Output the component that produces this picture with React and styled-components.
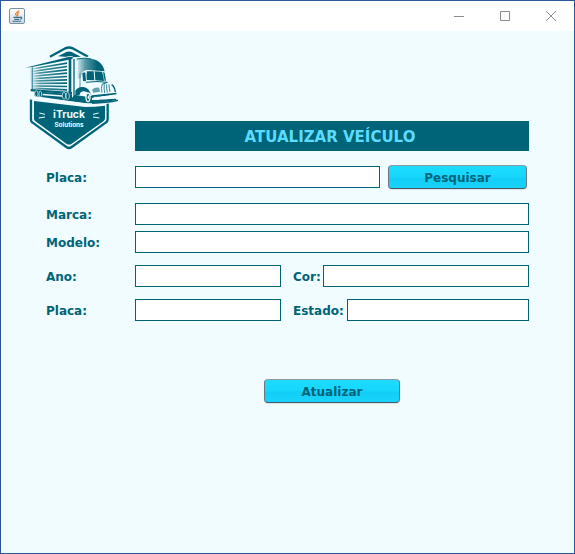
import React from "react";
import styled, { createGlobalStyle } from "styled-components";

const teal = "#006478";
const pale = "#f0fcff";

const GlobalStyle = createGlobalStyle`
  *, *::before, *::after { box-sizing: border-box; }
  body { margin: 0; font-family: "DejaVu Sans", Verdana, sans-serif; }
`;

const Window = styled.div`
  display: flex;
  flex-direction: column;
  min-height: 100vh;
  border: 1px solid #2b5797;
  background: ${pale};
`;

const TitleBar = styled.header`
  display: flex;
  align-items: center;
  justify-content: space-between;
  height: 30px;
  padding-left: 8px;
  background: #fff;
`;

const WindowControls = styled.div`
  display: flex;
`;

const ControlButton = styled.button`
  display: grid;
  place-items: center;
  width: 46px;
  height: 30px;
  padding: 0;
  border: 0;
  background: transparent;
  color: #8c8c8c;
`;

const Header = styled.div`
  display: flex;
  align-items: flex-end;
  gap: 17px;
  padding: 15px 45px 0 23px;
`;

const Logo = styled.svg`
  display: block;
  flex: none;
  width: 94px;
  height: 105px;
`;

const Banner = styled.h1`
  flex: 1;
  margin: 0;
  padding: 2px 4px 0 0;
  background: ${teal};
  color: #5adcff;
  font-size: 15px;
  font-weight: bold;
  line-height: 28px;
  text-align: center;
`;

const Form = styled.form`
  display: flex;
  flex-direction: column;
  padding: 14px 45px;
`;

const Row = styled.div`
  display: grid;
  grid-template-columns: 89px ${(p) => p.$columns || "1fr"};
  align-items: center;
  margin-bottom: ${(p) => p.$space}px;
`;

const Label = styled.label`
  padding-top: 2px;
  color: ${teal};
  font-size: 12px;
  font-weight: bold;
  line-height: 20px;
`;

const Field = styled.input`
  flex: 1;
  width: 100%;
  min-width: 0;
  height: 22px;
  padding: 0 4px;
  border: 1px solid ${teal};
  border-radius: 0;
  background: #fff;
  color: ${teal};
  font: 12px "DejaVu Sans", Verdana, sans-serif;
`;

const Pair = styled.div`
  display: flex;
  gap: ${(p) => p.$gap}px;
  padding-left: 12px;
`;

const SearchGroup = styled.div`
  display: flex;
  align-items: center;
  gap: 8px;
  padding-right: 2px;
`;

const Button = styled.button`
  width: ${(p) => p.$width}px;
  height: 24px;
  padding: 2px 0 0;
  border: 1px solid;
  border-color: #8c9ba5 #6c7885 #4b5563 #6c7885;
  border-radius: 4px;
  background: linear-gradient(#1edcff, #16d6fc 50%, #12cdf5 55%, #18d4fb);
  box-shadow: 0 1px 1px #d5e6eb;
  color: ${teal};
  font: bold 12px "DejaVu Sans", Verdana, sans-serif;
`;

const Actions = styled.div`
  display: flex;
  justify-content: center;
  padding: 58px 0 0 89px;
`;

function JavaIcon() {
  return (
    <svg width="16" height="16" viewBox="0 0 16 16" aria-hidden="true">
      <defs>
        <linearGradient id="tile" x1="0" y1="0" x2="0" y2="1">
          <stop offset="0" stopColor="#fff" />
          <stop offset="1" stopColor="#cfd9e2" />
        </linearGradient>
      </defs>
      <rect x=".5" y=".5" width="15" height="15" rx="1.5" fill="url(#tile)" stroke="#7890a3" />
      <path d="M10 2.2C10 4 6.3 4.6 6.5 6.1c.1 1 1.5 1.3 1 2.3M10.3 4.6C8.4 5.4 8 6.2 8.8 7c.5.6.2 1-.2 1.4" fill="none" stroke="#ef7b23" strokeWidth="1.1" />
      <path d="M4.4 9.4h6.8M5.3 11.4h5M3.4 13.3h8.8M11 9.2c2.4-.6 2.4 1.6.2 2" fill="none" stroke="#39708f" strokeWidth="1.1" />
    </svg>
  );
}

const slats = Array.from({ length: 9 }, (_, i) => i);

function TruckLogo() {
  return (
    <Logo viewBox="12 12 282 315" role="img" aria-label="iTruck Solutions">
      <defs>
        <linearGradient id="slat" gradientUnits="userSpaceOnUse" x1="26" y1="0" x2="144" y2="0">
          <stop offset="0" stopColor={teal} stopOpacity="0" />
          <stop offset=".3" stopColor={teal} stopOpacity=".7" />
          <stop offset="1" stopColor={teal} />
        </linearGradient>
        <linearGradient id="roof" gradientUnits="userSpaceOnUse" x1="166" y1="0" x2="232" y2="0">
          <stop offset="0" stopColor={teal} stopOpacity="0" />
          <stop offset=".45" stopColor={teal} stopOpacity=".65" />
          <stop offset="1" stopColor={teal} />
        </linearGradient>
      </defs>

      <path d="M90 44L136 19q11-5 22 0l46 25" fill="none" stroke={teal} strokeWidth="7" />
      <path d="M114 43l25-13q8-3 16 0l28 14-30 2z" fill={teal} />

      <path d="M33 172v61q0 6 5 9l101 73q8 6 16 0l102-73q6-4 6-10v-48" fill="none" stroke={teal} strokeWidth="7" />
      <path d="M42 177L196 195q30 0 59-4v38q0 5-4 8l-96 68q-8 5-16 0L46 238q-4-3-4-8z" fill={teal} />

      <path d="M16 76L148 42h10v115L34 146z" fill={pale} />
      <path d="M16 77L148 44l10 0v6L140 55 36 75z" fill={teal} />
      <path d="M146 46h8v106l-8-1z" fill={teal} />
      {slats.map((i) => (
        <path
          key={i}
          d={`M${26 + i} ${80 + i * 7}L141 ${61 + i * 10}v5L${26 + i} ${85 + i * 7}z`}
          fill="url(#slat)"
        />
      ))}
      <path d="M37 76v68" stroke={teal} strokeWidth="4" opacity=".6" />
      <path d="M32 141L156 150v7L32 148z" fill={teal} />
      <path d="M44 148L156 157v9l50 9 80-5 6 5-84 11L44 162z" fill={teal} />
      <path d="M68 155L126 160v4L68 160z" fill={pale} />
      <g fill={teal} stroke={pale} strokeWidth="2">
        <ellipse cx="49" cy="155" rx="5" ry="9" />
        <ellipse cx="61" cy="156" rx="4" ry="9" />
        <ellipse cx="132" cy="161" rx="5" ry="11" />
        <ellipse cx="143" cy="162" rx="5" ry="11" />
      </g>

      <path d="M160 48q20-6 50-3 28 3 38 20 8 12 10 28l5 24 18 6q10 6 12 28l-6 8-72 11-55-10z" fill={pale} />
      <path d="M168 51q22-4 44-1 24 3 34 19 6 9 8 19l-50-4q-16 0-19 12l-3 12-10 4V66z" fill="url(#roof)" />
      <path d="M162 51v108" stroke={teal} strokeWidth="4" />
      <path d="M170 51q24-5 44 0" fill="none" stroke={teal} strokeWidth="3" />
      <path d="M168 60l6-4-2 44-4 6z" fill={pale} />
      <path d="M187 93l9-2 2 27-9-1z" fill={teal} />
      <path d="M201 88h20l2 27-23-1q-1-16 1-26zM224 88l22 1q5 12 6 28l-26-2zM249 90l5 2 4 24-4 1z" fill={teal} />
      <path d="M180 94v38q0 10-5 18" fill="none" stroke={teal} strokeWidth="2" />
      <path d="M198 121q34-5 64 0l-16 6" fill="none" stroke={teal} strokeWidth="3" />
      <path d="M166 160v-14q9-13 24-11 18 2 22 23l-8-4q-6-8-16-6-8 2-10 12z" fill={teal} />
      <path d="M216 143q8-8 22-6l2 12-20 3z" fill={teal} opacity=".6" />
      <path d="M246 128q-3 10 0 24M253 127q-2 11 1 26M260 127q-1 12 2 25M267 127q0 12 3 23" fill="none" stroke={teal} strokeWidth="3" opacity=".75" />
      <path d="M275 128q9 6 11 22" fill="none" stroke={teal} strokeWidth="4" />
      <path d="M161 158l44 7 12-5 72-8 1 5-73 10-3 13-56-13z" fill={teal} />
      <path d="M222 164h16v10h-16zM244 162h18v10h-18zM268 160h13v10h-13z" fill={pale} opacity=".75" />
      <ellipse cx="204" cy="166" rx="6" ry="13" fill={teal} stroke={pale} strokeWidth="4" />
      <ellipse cx="205" cy="166" rx="2" ry="6" fill={pale} />
      <path d="M26 163L200 184q45 0 94-11v4q-48 14-94 16L28 172z" fill={pale} />
      <path d="M216 181q42-2 78-8l1 4q-32 8-79 9z" fill={teal} />

      <path d="M58 213l17 4M56 228l19-3M219 217l17-4M219 225l19 3" fill="none" stroke={pale} strokeWidth="3" />
      <g fill={pale} textAnchor="middle" fontFamily="Inter, sans-serif" fontWeight="bold">
        <text x="147" y="229" fontSize="31">iTruck</text>
        <text x="147" y="256" fontSize="19">Solutions</text>
      </g>
    </Logo>
  );
}

export default function App() {
  return (
    <>
      <GlobalStyle />
      <Window>
        <TitleBar>
          <JavaIcon />
          <WindowControls>
            <ControlButton type="button" aria-label="Minimizar">
              <svg width="10" height="10" stroke="currentColor"><path d="M0 5.5h10" /></svg>
            </ControlButton>
            <ControlButton type="button" aria-label="Maximizar">
              <svg width="10" height="10" stroke="currentColor" fill="none"><path d="M.5.5h9v9h-9z" /></svg>
            </ControlButton>
            <ControlButton type="button" aria-label="Fechar">
              <svg width="10" height="10" stroke="currentColor"><path d="M0 0l10 10M10 0L0 10" /></svg>
            </ControlButton>
          </WindowControls>
        </TitleBar>
        <main>
          <Header>
            <TruckLogo />
            <Banner>ATUALIZAR VEÍCULO</Banner>
          </Header>
          <Form onSubmit={(e) => e.preventDefault()}>
            <Row $space={14}>
              <Label htmlFor="busca">Placa:</Label>
              <SearchGroup>
                <Field id="busca" />
                <Button type="button" $width={139}>Pesquisar</Button>
              </SearchGroup>
            </Row>
            <Row $space={6}>
              <Label htmlFor="marca">Marca:</Label>
              <Field id="marca" />
            </Row>
            <Row $space={12}>
              <Label htmlFor="modelo">Modelo:</Label>
              <Field id="modelo" />
            </Row>
            <Row $space={12} $columns="146px 1fr">
              <Label htmlFor="ano">Ano:</Label>
              <Field id="ano" />
              <Pair $gap={2}>
                <Label htmlFor="cor">Cor:</Label>
                <Field id="cor" />
              </Pair>
            </Row>
            <Row $space={0} $columns="146px 1fr">
              <Label htmlFor="placa">Placa:</Label>
              <Field id="placa" />
              <Pair $gap={3}>
                <Label htmlFor="estado">Estado:</Label>
                <Field id="estado" />
              </Pair>
            </Row>
            <Actions>
              <Button type="submit" $width={136}>Atualizar</Button>
            </Actions>
          </Form>
        </main>
      </Window>
    </>
  );
}
